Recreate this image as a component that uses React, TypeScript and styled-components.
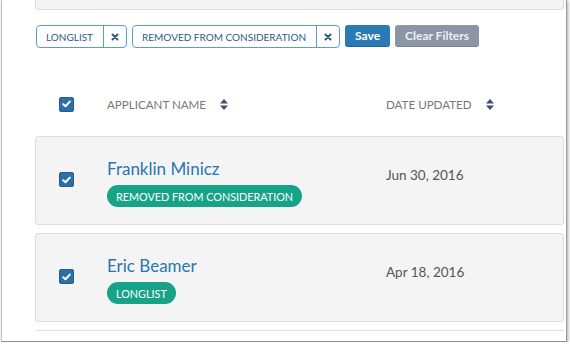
import React from 'react';
import styled, { createGlobalStyle } from 'styled-components';

const GlobalStyle = createGlobalStyle`
    html, body {
        margin: 0;
        padding: 0;
        background: #ffffff;
    }
    body {
        font-family: 'Lato', 'Liberation Sans', sans-serif;
    }
`;

const Frame = styled.div`
    box-sizing: border-box;
    width: 566px;
    height: 342px;
    margin-left: 1px;
    border-left: 1px solid #c4c4c4;
    border-right: 1px solid #9a9a9a;
    border-bottom: 1px solid #8f8f8f;
    box-shadow: 1px 1px 3px rgba(0, 0, 0, 0.35);
    background: #ffffff;
    padding: 0 2px 0 33px;
    overflow: hidden;
`;

const TopPanel = styled.div`
    height: 10px;
    box-sizing: border-box;
    background: #f4f4f4;
    border: 1px solid #dcdcdc;
    border-top: none;
    border-radius: 0 0 4px 4px;
`;

const FilterBar = styled.div`
    display: flex;
    align-items: center;
    gap: 5px;
    margin-top: 15px;
    margin-left: 1px;
    height: 23px;
`;

const Tag = styled.div`
    display: flex;
    align-items: stretch;
    height: 23px;
    box-sizing: border-box;
    border: 1px solid #5a9ccf;
    border-radius: 4px;
    color: #2c5a86;
    font-size: 10px;
`;

const TagLabel = styled.span`
    display: flex;
    align-items: center;
    padding: 0 10px 0 9px;
    border-right: 1px solid #5a9ccf;
`;

const TagRemove = styled.span`
    display: flex;
    align-items: center;
    justify-content: center;
    width: 22px;
    svg {
        display: block;
    }
`;

const Button = styled.button<{ $variant: 'primary' | 'muted' }>`
    height: 22px;
    box-sizing: border-box;
    border: none;
    border-radius: 3px;
    padding: 0 10px;
    font-family: 'Lato', 'Liberation Sans', sans-serif;
    font-weight: 700;
    font-size: 12px;
    background: ${(p) => (p.$variant === 'primary' ? '#2a7bb5' : '#8c95a5')};
    color: ${(p) => (p.$variant === 'primary' ? '#ffffff' : '#eef0f3')};
    border-bottom: 1px solid
        ${(p) => (p.$variant === 'primary' ? '#1f6394' : '#7b8393')};
    margin-top: -1px;
`;

const HeaderRow = styled.div`
    display: grid;
    grid-template-columns: 48px 279px 1fr;
    align-items: center;
    height: 46px;
    margin-top: 33px;
    margin-bottom: 9px;
    padding-left: 24px;
`;

const HeaderCell = styled.div`
    display: flex;
    align-items: center;
    gap: 14px;
    font-size: 11.6px;
    color: #777777;
`;

const Card = styled.div`
    display: grid;
    grid-template-columns: 48px 279px 1fr;
    align-items: start;
    box-sizing: border-box;
    height: 89px;
    margin-bottom: 8px;
    padding: 21px 0 0 23px;
    background: #f4f4f4;
    border: 1px solid #dddddd;
    border-radius: 3px;
`;

const Box = styled.span<{ $offset?: number }>`
    display: flex;
    align-items: center;
    justify-content: center;
    width: 15px;
    height: 15px;
    margin-top: ${(p) => p.$offset ?? 0}px;
    border-radius: 2px;
    background: #2b6fa6;
    border: 1px solid #245f90;
    box-sizing: border-box;
`;

const NameCell = styled.div`
    display: flex;
    flex-direction: column;
    align-items: flex-start;
`;

const Name = styled.a`
    font-size: 17px;
    line-height: 21px;
    color: #2a76b0;
    text-decoration: none;
    margin-bottom: 6px;
`;

const Badge = styled.span`
    display: inline-flex;
    align-items: center;
    height: 22px;
    padding: 0 9px;
    border-radius: 11px;
    background: #16a388;
    color: #ffffff;
    font-size: 10.8px;
`;

const DateText = styled.div`
    font-size: 13.5px;
    line-height: 20px;
    color: #555555;
    margin-top: 7px;
`;

const Divider = styled.div`
    border-top: 1px solid #dddddd;
    margin-top: 7px;
`;

const Check = () => (
    <svg width="9" height="8" viewBox="0 0 9 8">
        <path
            d="M1.2 4.2L3.5 6.3L7.8 1.6"
            fill="none"
            stroke="#ffffff"
            strokeWidth="2"
            strokeLinecap="round"
            strokeLinejoin="round"
        />
    </svg>
);

const Cross = () => (
    <svg width="8" height="8" viewBox="0 0 8 8">
        <path
            d="M1.5 1.5L6.5 6.5M6.5 1.5L1.5 6.5"
            stroke="#2c5a86"
            strokeWidth="2"
            strokeLinecap="round"
        />
    </svg>
);

const Sort = () => (
    <svg width="8" height="11" viewBox="0 0 8 11">
        <path d="M4 0L8 4.5H0Z" fill="#3f4e6e" />
        <path d="M4 11L8 6.5H0Z" fill="#3f4e6e" />
    </svg>
);

interface IApplicant {
    name: string;
    status: string;
    updated: string;
}

const applicants: IApplicant[] = [
    {
        name: 'Franklin Minicz',
        status: 'REMOVED FROM CONSIDERATION',
        updated: 'Jun 30, 2016',
    },
    { name: 'Eric Beamer', status: 'LONGLIST', updated: 'Apr 18, 2016' },
];

const filters = ['LONGLIST', 'REMOVED FROM CONSIDERATION'];

const App: React.FC = () => {
    return (
        <>
            <GlobalStyle />
            <Frame>
                <TopPanel />
                <FilterBar>
                    {filters.map((f) => (
                        <Tag key={f}>
                            <TagLabel>{f}</TagLabel>
                            <TagRemove>
                                <Cross />
                            </TagRemove>
                        </Tag>
                    ))}
                    <Button $variant="primary">Save</Button>
                    <Button $variant="muted">Clear Filters</Button>
                </FilterBar>
                <HeaderRow>
                    <Box>
                        <Check />
                    </Box>
                    <HeaderCell>
                        APPLICANT NAME
                        <Sort />
                    </HeaderCell>
                    <HeaderCell>
                        DATE UPDATED
                        <Sort />
                    </HeaderCell>
                </HeaderRow>
                {applicants.map((a) => (
                    <Card key={a.name}>
                        <Box $offset={14}>
                            <Check />
                        </Box>
                        <NameCell>
                            <Name href="#">{a.name}</Name>
                            <Badge>{a.status}</Badge>
                        </NameCell>
                        <DateText>{a.updated}</DateText>
                    </Card>
                ))}
                <Divider />
            </Frame>
        </>
    );
};

export default App;
